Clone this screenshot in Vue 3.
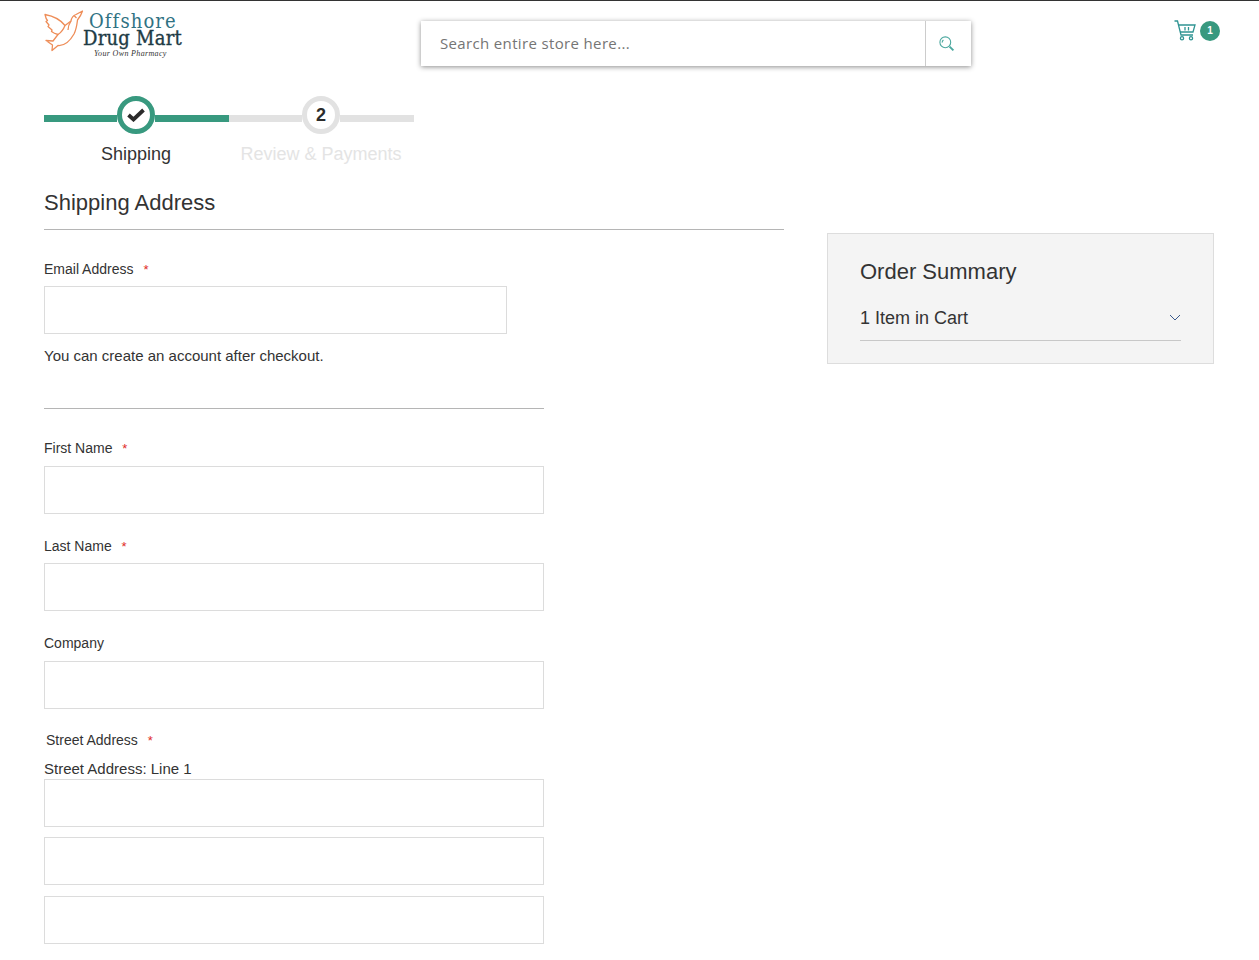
<script setup>
const fields = [
  { label: 'First Name', required: true },
  { label: 'Last Name', required: true },
  { label: 'Company', required: false }
]
</script>

<template>
  <div class="page">
    <header class="header">
      <div class="logo">
        <svg class="dove" viewBox="0 0 40 42" width="40" height="42" fill="none" stroke="#ee8d58" stroke-width="1.3" stroke-linejoin="round">
          <path d="M38.5 1 L32 4.5 C29 5.5 27.5 8 27 11 L21 15.5 C16 9 9 6 1 4.5 C1.5 7 2 9 3.5 10.5 L2 11.5 L5 15 L4 16.5 L8 20 L7.5 21.5 C10 23.5 12 24 14 24.5 L9 31 L2 30.5 L8.5 35 L8 40.5 L14 35.5 C20 36 26 31 30 24 C32.5 19 33 14 33.5 10 C36 7 37.5 4 38.5 1 Z" />
          <path d="M27 11 C25 14 24 17 24 20 M21 15.5 C20 18 18 22 14 24.5 M30 5.5 L32.5 8" />
        </svg>
        <div class="logo-text">
          <span class="logo-top">Offshore</span>
          <span class="logo-mid">Drug Mart</span>
          <span class="logo-tag">Your Own Pharmacy</span>
        </div>
      </div>

      <div class="search">
        <span class="search-input">Search entire store here...</span>
        <span class="search-btn">
          <svg viewBox="0 0 16 16" width="16" height="16" fill="none" stroke="#4ca89f" stroke-width="1.1">
            <circle cx="6.3" cy="6.3" r="5.4" />
            <path d="M3.2 6.6 A3 3 0 0 1 4.4 4" />
            <path d="M10.6 10.6 L14.4 14.4" stroke-width="2" />
          </svg>
        </span>
      </div>

      <div class="cart">
        <svg viewBox="0 0 22 21" width="22" height="21" fill="none" stroke="#2f9493" stroke-width="1.3">
          <path d="M0.5 1 H3.5 L7 15 H19" />
          <path d="M4.5 5 H21 L19 12 H6" />
          <path d="M11 7 V10.5 M14.5 7 V10.5" />
          <circle cx="8" cy="18.2" r="1.6" />
          <circle cx="17" cy="18.2" r="1.6" />
        </svg>
        <span class="cart-count">1</span>
      </div>
    </header>

    <div class="steps">
      <div class="step done">
        <div class="track">
          <span class="seg"></span>
          <span class="circle">
            <svg viewBox="0 0 18 14" width="18" height="14" fill="none" stroke="#2b2b2b" stroke-width="3.8">
              <path d="M1.5 7 L6.5 11.5 L16.5 2" />
            </svg>
          </span>
          <span class="seg"></span>
        </div>
        <div class="step-label">Shipping</div>
      </div>
      <div class="step">
        <div class="track">
          <span class="seg"></span>
          <span class="circle">2</span>
          <span class="seg"></span>
        </div>
        <div class="step-label">Review &amp; Payments</div>
      </div>
    </div>

    <main class="columns">
      <section class="form">
        <h2 class="form-title">Shipping Address</h2>

        <div class="email">
          <label class="label">Email Address <span class="req">*</span></label>
          <input class="input email-input" type="text" />
          <p class="note">You can create an account after checkout.</p>
        </div>

        <div class="address">
          <div v-for="f in fields" :key="f.label" class="field">
            <label class="label">{{ f.label }} <span v-if="f.required" class="req">*</span></label>
            <input class="input" type="text" />
          </div>

          <div class="street">
            <label class="label street-label">Street Address <span class="req">*</span></label>
            <div class="line-label">Street Address: Line 1</div>
            <input class="input" type="text" />
            <input class="input line2" type="text" />
            <input class="input line3" type="text" />
          </div>
        </div>
      </section>

      <aside class="summary">
        <h3 class="summary-title">Order Summary</h3>
        <div class="summary-row">
          <span>1 Item in Cart</span>
          <svg class="chevron" viewBox="0 0 12 7" width="12" height="7" fill="none" stroke="#3a5a8c" stroke-width="1">
            <path d="M1 1 L6 6 L11 1" />
          </svg>
        </div>
      </aside>
    </main>
  </div>
</template>

<style>
html, body {
  margin: 0;
  background: #fff;
}
</style>

<style scoped>
.page {
  width: 1259px;
  height: 960px;
  overflow: hidden;
  box-sizing: border-box;
  border-top: 1px solid #333;
  font-family: "Liberation Sans", Arial, sans-serif;
  color: #333;
}

.header {
  display: flex;
  align-items: flex-start;
  height: 95px;
  padding-left: 44px;
  box-sizing: border-box;
}

.logo {
  display: flex;
  width: 377px;
  height: 62px;
  padding-top: 9px;
  box-sizing: border-box;
}

.dove {
  flex-shrink: 0;
}

.logo-text {
  display: flex;
  flex-direction: column;
  width: 100px;
  margin-left: -1px;
  white-space: nowrap;
  font-family: "DejaVu Serif Condensed", "DejaVu Serif", serif;
}

.logo-top {
  font-size: 20px;
  line-height: 18px;
  margin-top: 2px;
  margin-left: 6px;
  letter-spacing: 1.1px;
  color: #2f7283;
}

.logo-mid {
  font-size: 20px;
  line-height: 17px;
  letter-spacing: 0.25px;
  -webkit-text-stroke: 0.35px #1d3b45;
  color: #1d3b45;
}

.logo-tag {
  font-family: "Liberation Serif", serif;
  font-style: italic;
  font-size: 8px;
  line-height: 10px;
  margin-top: 2px;
  margin-left: 11px;
  letter-spacing: 0.35px;
  color: #333;
}

.search {
  display: flex;
  width: 550px;
  height: 45px;
  margin-top: 20px;
  background: #fff;
  box-shadow: 0 1px 5px rgba(0, 0, 0, 0.45);
}

.search-input {
  flex: 1;
  padding-left: 19px;
  line-height: 45px;
  font-family: "Open Sans", sans-serif;
  font-size: 15px;
  letter-spacing: 0.35px;
  color: #757575;
}

.search-btn {
  display: flex;
  align-items: center;
  justify-content: center;
  width: 46px;
  border-left: 1px solid #ccc;
  padding-top: 1px;
  padding-right: 4px;
  box-sizing: border-box;
}

.cart {
  display: flex;
  align-items: center;
  margin-top: 19px;
  margin-left: 203px;
  gap: 4px;
}

.cart-count {
  width: 20px;
  height: 20px;
  border-radius: 50%;
  background: #38997f;
  color: #fff;
  font-size: 10px;
  font-weight: 700;
  line-height: 20px;
  text-align: center;
}

.steps {
  display: flex;
  padding-left: 44px;
}

.step {
  width: 185px;
  text-align: center;
}

.track {
  display: flex;
  align-items: flex-start;
  height: 38px;
}

.seg {
  flex: 1;
  height: 7px;
  margin-top: 19px;
  background: #e2e2e2;
}

.seg:first-child {
  flex: 0 0 73px;
}

.circle {
  display: flex;
  align-items: center;
  justify-content: center;
  width: 38px;
  height: 38px;
  box-sizing: border-box;
  border: 5px solid #e2e2e2;
  border-radius: 50%;
  background: #fff;
  font-size: 18px;
  font-weight: 700;
  color: #2b2b2b;
}

.step-label {
  margin-top: 8px;
  padding-right: 1px;
  font-size: 18px;
  line-height: 24px;
  color: #e4e4e4;
}

.done .seg {
  background: #38997f;
}

.done .circle {
  border-color: #38997f;
}

.done .step-label {
  color: #333;
}

.columns {
  display: flex;
  align-items: flex-start;
  padding-left: 44px;
}

.form {
  width: 740px;
}

.form-title {
  margin: 0;
  height: 39px;
  padding-top: 24px;
  border-bottom: 1px solid #b5b5b5;
  font-size: 22px;
  line-height: 26px;
  font-weight: 400;
}

.label {
  display: block;
  font-size: 14px;
  line-height: 18px;
  color: #333;
}

.req {
  margin-left: 6px;
  color: #e02b27;
  font-size: 13px;
}

.input {
  display: block;
  width: 500px;
  height: 48px;
  box-sizing: border-box;
  padding: 0 10px;
  border: 1px solid #dcdcdc;
  border-radius: 0;
  background: #fff;
  outline: none;
}

.email {
  width: 500px;
  padding-top: 30px;
  padding-bottom: 32px;
  border-bottom: 1px solid #b5b5b5;
}

.email-input {
  width: 463px;
  margin-top: 7px;
}

.note {
  margin: 13px 0 0;
  font-size: 15px;
  line-height: 18px;
  padding-bottom: 11px;
  color: #333;
}

.address {
  padding-top: 30px;
}

.field {
  margin-bottom: 23px;
}

.field:nth-child(2) {
  margin-bottom: 23px;
}

.field:nth-child(3) {
  margin-bottom: 22px;
}

.field .input {
  margin-top: 8px;
}

.field:nth-child(2) .input {
  margin-top: 7px;
}

.field:nth-child(3) .input {
  margin-top: 9px;
}

.street-label {
  padding-left: 2px;
}

.line-label {
  margin-top: 9px;
  font-size: 15px;
  line-height: 20px;
  height: 20px;
  color: #333;
}

.line2 {
  margin-top: 10px;
}

.line3 {
  margin-top: 11px;
}

.summary {
  width: 387px;
  height: 131px;
  margin-top: 67px;
  margin-left: 43px;
  box-sizing: border-box;
  padding: 23px 32px 0;
  background: #f4f4f4;
  border: 1px solid #ddd;
}

.summary-title {
  margin: 0;
  font-size: 22px;
  line-height: 30px;
  font-weight: 400;
}

.summary-row {
  display: flex;
  align-items: center;
  justify-content: space-between;
  height: 53px;
  padding-top: 8px;
  box-sizing: border-box;
  margin-top: 1px;
  border-bottom: 1px solid #c8c8c8;
  font-size: 18px;
}

.chevron {
  margin-bottom: 2px;
}
</style>
